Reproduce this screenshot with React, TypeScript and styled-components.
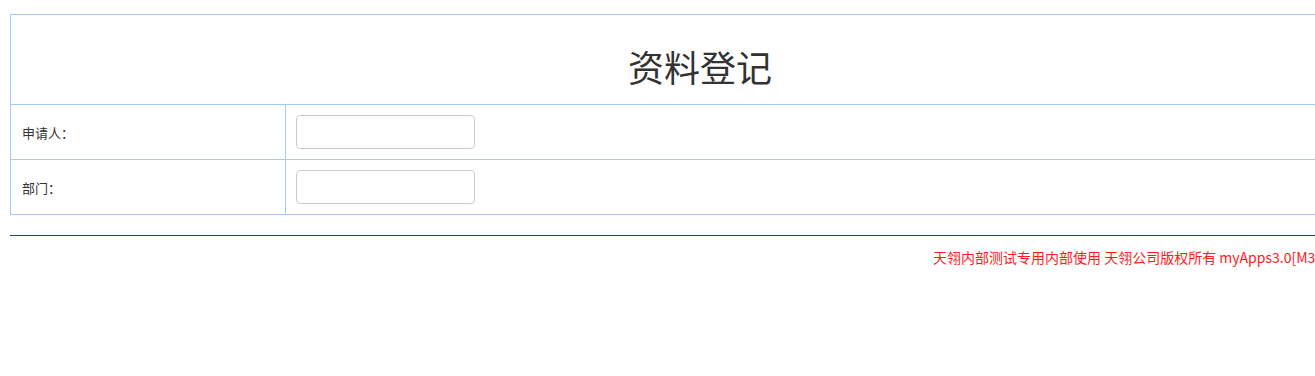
import styled, { createGlobalStyle } from 'styled-components';

const GlobalStyle = createGlobalStyle`
  body {
    margin: 0;
    background: #fff;
    font-family: "Microsoft YaHei", "Noto Sans CJK SC", sans-serif;
    color: #333;
  }
`;

const Page = styled.div`
  width: 1380px;
  padding: 14px 10px 0;
`;

const FormTable = styled.table`
  width: 100%;
  border-collapse: collapse;
  border: 1px solid #a6cbf3;
`;

const TitleCell = styled.td`
  height: 90px;
  padding: 12px 0 0;
  box-sizing: border-box;
  text-align: center;
  font-size: 36px;
  color: #333;
  border-bottom: 1px solid #a6cbf3;
`;

const Row = styled.tr<{ $last?: boolean }>`
  height: 55px;
  border-bottom: 1px solid ${(p) => (p.$last ? '#a6cbf3' : '#b9c8d8')};
`;

const LabelCell = styled.td`
  width: 275px;
  box-sizing: border-box;
  padding: 0 11px;
  font-size: 13px;
  color: #333;
  border-right: 1px solid #a6cbf3;
  vertical-align: middle;
`;

const FieldCell = styled.td`
  padding: 0 10px;
  vertical-align: middle;
`;

const TextInput = styled.input`
  display: block;
  width: 179px;
  height: 34px;
  box-sizing: border-box;
  border: 1px solid #ccc;
  border-radius: 4px;
  padding: 6px 12px;
  font-size: 14px;
  outline: none;
`;

const Divider = styled.hr`
  margin: 20px 0 0;
  border: none;
  border-top: 1px solid #1d3d8f;
`;

const Footer = styled.div`
  padding-top: 11px;
  text-align: right;
  font-size: 14px;
  color: #ff1a1a;
  white-space: nowrap;
`;

export default function App() {
  return (
    <>
      <GlobalStyle />
      <Page>
        <FormTable>
          <tbody>
            <tr>
              <TitleCell colSpan={2}>资料登记</TitleCell>
            </tr>
            <Row>
              <LabelCell>申请人：</LabelCell>
              <FieldCell>
                <TextInput type="text" />
              </FieldCell>
            </Row>
            <Row $last>
              <LabelCell>部门：</LabelCell>
              <FieldCell>
                <TextInput type="text" />
              </FieldCell>
            </Row>
          </tbody>
        </FormTable>
        <Divider />
        <Footer>天翎内部测试专用内部使用 天翎公司版权所有 myApps3.0[M3.1.2016081]</Footer>
      </Page>
    </>
  );
}
